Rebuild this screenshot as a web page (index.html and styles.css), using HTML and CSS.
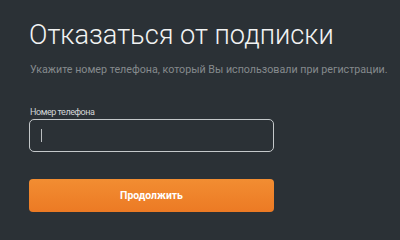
FILE: index.html
```html
<!DOCTYPE html>
<html lang="ru">
<head>
<meta charset="utf-8">
<link rel="stylesheet" href="styles.css">
</head>
<body>
<main class="page">
  <h1 class="title">Отказаться от подписки</h1>
  <p class="subtitle">Укажите номер телефона, который Вы использовали при регистрации.</p>
  <form class="form">
    <label class="label" for="phone">Номер телефона</label>
    <div class="input">
      <span class="caret"></span>
    </div>
    <button type="button" class="button">Продолжить</button>
  </form>
</main>
</body>
</html>
```
FILE: styles.css
```css
html, body {
  margin: 0;
  padding: 0;
  background: #2b3136;
  height: 100%;
}
.page {
  padding: 21px 0 0 29px;
  font-family: Roboto, "Noto Sans", sans-serif;
}
.title {
  margin: 0;
  font-size: 27.2px;
  line-height: 28px;
  font-weight: 300;
  color: #f2f3f3;
}
.subtitle {
  margin: 15px 0 0 1px;
  font-size: 10.7px;
  line-height: 11px;
  color: #858a8d;
}
.form {
  display: flex;
  flex-direction: column;
  width: 245px;
  margin-top: 32px;
}
.label {
  font-size: 9px;
  line-height: 10px;
  letter-spacing: -0.45px;
  color: #d2d5d7;
  margin-left: 1px;
}
.input {
  margin-top: 2px;
  height: 33px;
  box-sizing: border-box;
  border: 1px solid #c4c8ca;
  border-radius: 5px;
  display: flex;
  align-items: center;
  padding-left: 11px;
}
.caret {
  width: 1px;
  height: 13px;
  background: #b9bdbf;
}
.button {
  margin-top: 27px;
  height: 33px;
  border: none;
  border-radius: 4px;
  background: linear-gradient(180deg, #f28d32 0%, #ec7a24 100%);
  color: #fff;
  font-family: Roboto, "Noto Sans", sans-serif;
  font-size: 10.4px;
  font-weight: 700;
  padding: 0;
}
```
